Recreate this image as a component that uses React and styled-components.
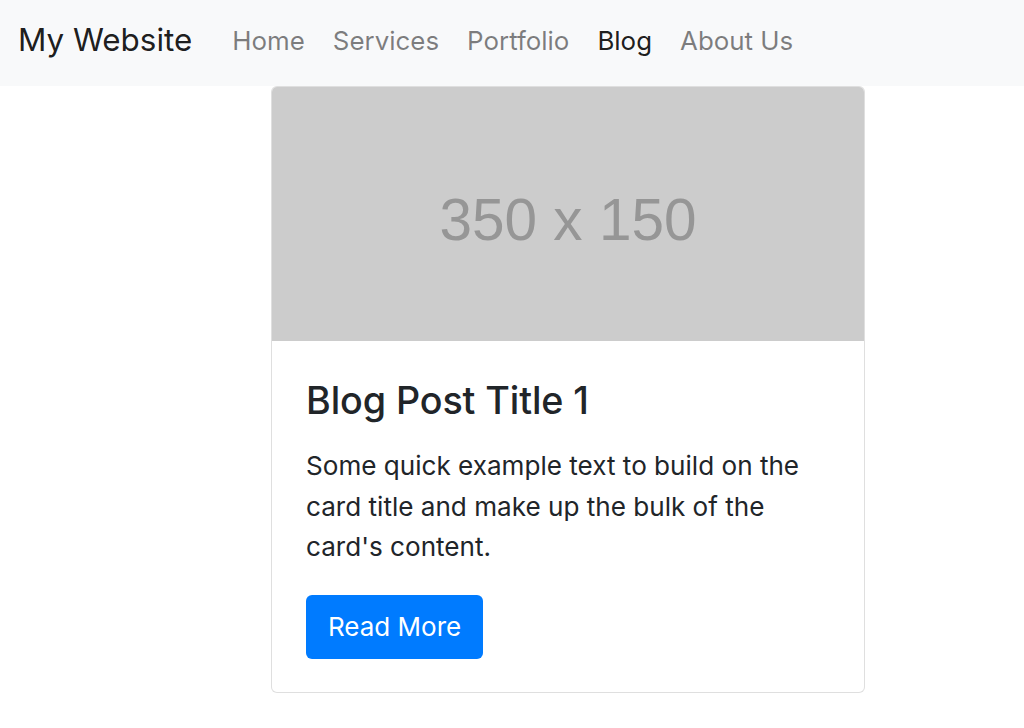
import React from "react";
import styled, { createGlobalStyle } from "styled-components";

const Global = createGlobalStyle`
  html, body { margin: 0; padding: 0; background: #fff; }
  body {
    font-family: Inter, "Noto Sans", "Liberation Sans", sans-serif;
    color: #212529;
    -webkit-font-smoothing: antialiased;
  }
  * { box-sizing: border-box; }
`;

const Navbar = styled.nav`
  height: 86px;
  background: #f8f9fa;
  display: flex;
  align-items: center;
  padding: 0 18px 4px;
`;

const Brand = styled.a`
  font-size: 31.4px;
  color: rgba(0, 0, 0, 0.9);
  text-decoration: none;
  margin-right: 26px;
  line-height: 1;
`;

const NavList = styled.ul`
  display: flex;
  list-style: none;
  margin: 0;
  padding: 0;
`;

const NavLink = styled.a`
  display: block;
  padding: 0 14px;
  font-size: 25.9px;
  line-height: 1;
  text-decoration: none;
  color: ${(p) => (p.$active ? "rgba(0,0,0,0.9)" : "rgba(0,0,0,0.5)")};
`;

const Main = styled.main`
  padding-left: 271px;
`;

const Card = styled.div`
  width: 594px;
  border: 1px solid rgba(0, 0, 0, 0.125);
  border-radius: 6px;
  background: #fff;
  overflow: hidden;
`;

const Placeholder = styled.div`
  height: 254px;
  background: #cccccc;
  display: flex;
  align-items: center;
  justify-content: center;
  font-family: "Liberation Sans", Arial, sans-serif;
  font-size: 58.5px;
  color: #969696;
  padding-top: 10px;
`;

const CardBody = styled.div`
  padding: 37px 34px 33px;
`;

const Title = styled.h5`
  margin: 0 0 22px;
  font-size: 37.7px;
  font-weight: 500;
  line-height: 1.2;
  color: #212529;
  letter-spacing: -0.1px;
`;

const Text = styled.p`
  margin: 0 0 27px;
  padding-top: 1px;
  font-size: 26.1px;
  line-height: 40.5px;
  color: #212529;
`;

const Button = styled.a`
  display: inline-flex;
  align-items: center;
  justify-content: center;
  height: 64px;
  padding: 0 22px;
  background: #007bff;
  color: #fff;
  font-size: 26px;
  border-radius: 6px;
  text-decoration: none;
`;

const links = ["Home", "Services", "Portfolio", "Blog", "About Us"];

export default function App() {
  return (
    <>
      <Global />
      <Navbar>
        <Brand href="#">My Website</Brand>
        <NavList>
          {links.map((l) => (
            <li key={l}>
              <NavLink href="#" $active={l === "Blog"}>
                {l}
              </NavLink>
            </li>
          ))}
        </NavList>
      </Navbar>
      <Main>
        <Card>
          <Placeholder>350 x 150</Placeholder>
          <CardBody>
            <Title>Blog Post Title 1</Title>
            <Text>
              Some quick example text to build on the card title and make up
              the bulk of the card's content.
            </Text>
            <Button href="#">Read More</Button>
          </CardBody>
        </Card>
      </Main>
    </>
  );
}
